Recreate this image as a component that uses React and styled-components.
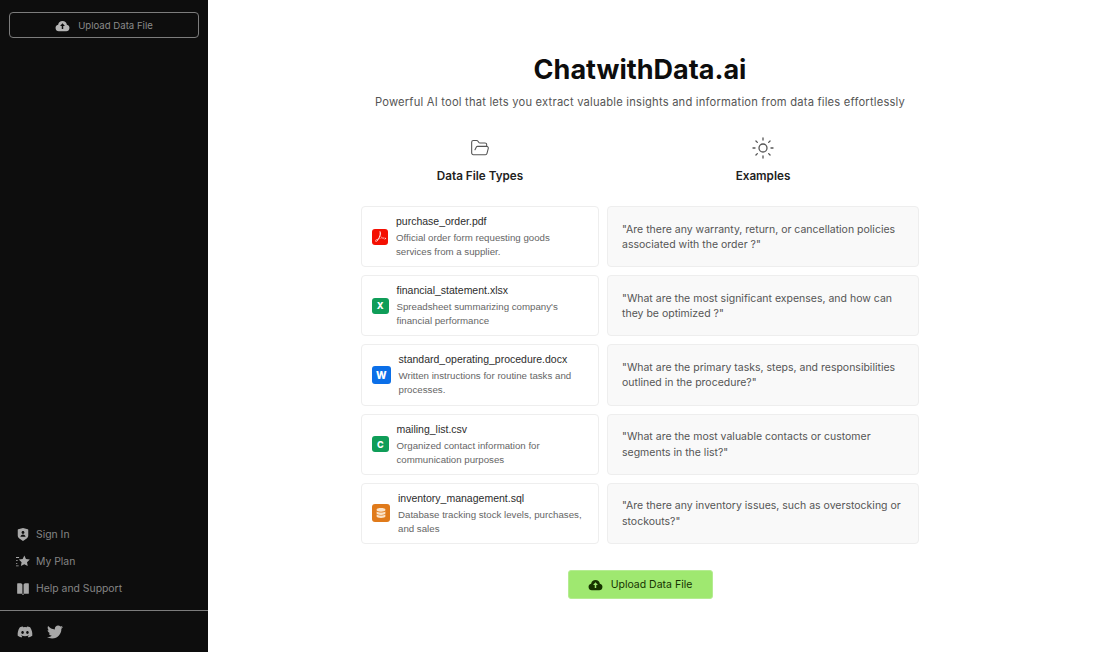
import React from "react"
import styled, { createGlobalStyle } from "styled-components"
import { FaDiscord, FaTwitter, FaDatabase } from "react-icons/fa"
import { RiShieldUserFill, RiBookOpenFill } from "react-icons/ri"
import { SiAdobeacrobatreader } from "react-icons/si"
import { FolderOpen, Sun } from "lucide-react"

const GlobalStyle = createGlobalStyle`
  html, body {
    margin: 0;
    padding: 0;
    height: 100%;
    background: #fff;
    font-family: Inter, "Liberation Sans", sans-serif;
  }
  * {
    box-sizing: border-box;
  }
`

const Page = styled.div`
  display: flex;
  width: 1120px;
  height: 652px;
  overflow: hidden;
`

const Sidebar = styled.aside`
  width: 208px;
  flex-shrink: 0;
  display: flex;
  flex-direction: column;
  background: #0d0d0d;
  color: #9b9b9b;
`

const SideTop = styled.div`
  flex: 1;
  padding: 12px 9px 0;
`

const SideUpload = styled.button`
  width: 100%;
  height: 26px;
  display: flex;
  align-items: center;
  justify-content: center;
  gap: 8px;
  background: transparent;
  border: 1px solid #7c7c7c;
  border-radius: 4px;
  color: #8a8a8a;
  font-family: inherit;
  font-size: 9.6px;
`

const SideNav = styled.nav`
  display: flex;
  flex-direction: column;
  gap: 7px;
  padding: 0 16px 12px;
`

const NavRow = styled.a`
  display: flex;
  align-items: center;
  gap: 6px;
  height: 20px;
  font-size: 10.4px;
  color: #858585;
`

const NavIcon = styled.span`
  width: 14px;
  display: flex;
  justify-content: center;
  color: #a8a8a8;
`

const SideSocial = styled.div`
  height: 42px;
  display: flex;
  align-items: center;
  gap: 14px;
  padding-left: 17px;
  border-top: 1px solid #7c7c7c;
  color: #a8a8a8;
`

const Main = styled.main`
  flex: 1;
  display: flex;
  flex-direction: column;
  align-items: center;
  padding: 52px 48px 0 0;
`

const Title = styled.h1`
  margin: 0;
  font-size: 27px;
  line-height: 36px;
  font-weight: 700;
  color: #0d0d0d;
`

const Subtitle = styled.p`
  margin: 4px 0 0;
  font-size: 11.2px;
  line-height: 20px;
  letter-spacing: 0.2px;
  color: #555;
`

const Board = styled.div`
  margin-top: 22px;
  display: grid;
  grid-template-columns: 238px 312px;
  column-gap: 8px;
`

const Column = styled.section`
  display: flex;
  flex-direction: column;
`

const ColumnHead = styled.header`
  height: 72px;
  display: flex;
  flex-direction: column;
  align-items: center;
  color: #555;
`

const HeadIcon = styled.span`
  height: 28px;
  display: flex;
  align-items: center;
`

const ColumnTitle = styled.h2`
  margin: 4px 0 0;
  font-size: 11.7px;
  line-height: 20px;
  font-weight: 600;
  color: #222;
`

const Stack = styled.div`
  display: flex;
  flex-direction: column;
  gap: 8px;
`

const FileCard = styled.div`
  height: 61.2px;
  display: flex;
  align-items: center;
  gap: 8px;
  padding: 0 14px 0 10px;
  background: #fff;
  border: 1px solid #eeeeee;
  border-radius: 4px;
  font-family: "Liberation Sans", Arial, sans-serif;
`

const Badge = styled.span`
  flex-shrink: 0;
  width: ${props => props.size}px;
  height: ${props => props.size}px;
  display: flex;
  align-items: center;
  justify-content: center;
  border-radius: 3px;
  background: ${props => props.color};
  color: #fff;
  font-family: Inter, sans-serif;
  font-size: ${props => props.size > 17 ? 10 : 9}px;
  font-weight: 800;
`

const FileText = styled.div`
  display: flex;
  flex-direction: column;
`

const FileName = styled.div`
  font-size: 10.5px;
  line-height: 15px;
  color: #2c2c2c;
`

const FileDesc = styled.div`
  margin-top: 2px;
  font-size: 9.7px;
  line-height: 14px;
  color: #666;
`

const ExampleCard = styled.div`
  height: 61.2px;
  display: flex;
  align-items: center;
  padding: 1px 14px 0;
  background: #f9f9f9;
  border: 1px solid #eeeeee;
  border-radius: 4px;
  font-size: 10.5px;
  line-height: 15.5px;
  color: #555;
`

const UploadButton = styled.button`
  margin-top: 26px;
  width: 145px;
  height: 29px;
  display: flex;
  align-items: center;
  justify-content: center;
  gap: 8px;
  background: #9fe870;
  border: 1px solid #b5ec92;
  border-radius: 3px;
  color: #163300;
  font-family: inherit;
  font-size: 10.5px;
`

const CloudIcon = ({ color }) => (
  <svg width="15" height="13" viewBox="0 0 16 14" fill={color} fillRule="evenodd">
    <path d="M4 13.2a3.6 3.6 0 0 1-.7-7.1 4.8 4.8 0 0 1 9.4 0 3.6 3.6 0 0 1-.7 7.1zM8 4.6l-2.6 3h1.8v3.2h1.6V7.6h1.8z" />
  </svg>
)

const PlanIcon = () => (
  <svg width="16" height="14" viewBox="0 0 16 14" fill="currentColor">
    <path d="M9.5.8l1.9 4 4.4.6-3.2 3 .8 4.4-3.9-2.1-3.9 2.1.8-4.4-3.2-3 4.4-.6z" />
    <path d="M0 2.5h3.5v1H0zM0 6h2v1H0zM0 9.5h1.5v1H0zM0 12h3v1H0z" />
  </svg>
)

const files = [
  { name: "purchase_order.pdf", desc: "Official order form requesting goods services from a supplier.", color: "#f40f02", size: 16, icon: <SiAdobeacrobatreader size={11} /> },
  { name: "financial_statement.xlsx", desc: "Spreadsheet summarizing company's financial performance", color: "#0f9d58", size: 16.5, icon: "X" },
  { name: "standard_operating_procedure.docx", desc: "Written instructions for routine tasks and processes.", color: "#0b6fe8", size: 18.5, icon: "W" },
  { name: "mailing_list.csv", desc: "Organized contact information for communication purposes", color: "#0f9d58", size: 16.5, icon: "C" },
  { name: "inventory_management.sql", desc: "Database tracking stock levels, purchases, and sales", color: "#e07a1a", size: 18, icon: <FaDatabase size={10} color="#fbe3c8" /> },
]

const examples = [
  "\"Are there any warranty, return, or cancellation policies associated with the order ?\"",
  "\"What are the most significant expenses, and how can they be optimized ?\"",
  "\"What are the primary tasks, steps, and responsibilities outlined in the procedure?\"",
  "\"What are the most valuable contacts or customer segments in the list?\"",
  "\"Are there any inventory issues, such as overstocking or stockouts?\"",
]

export default function App() {
  return (
    <Page>
      <GlobalStyle />
      <Sidebar>
        <SideTop>
          <SideUpload>
            <CloudIcon color="#b5b5b5" />
            Upload Data File
          </SideUpload>
        </SideTop>
        <SideNav>
          <NavRow><NavIcon><RiShieldUserFill size={15} /></NavIcon>Sign In</NavRow>
          <NavRow><NavIcon><PlanIcon /></NavIcon>My Plan</NavRow>
          <NavRow><NavIcon><RiBookOpenFill size={15} /></NavIcon>Help and Support</NavRow>
        </SideNav>
        <SideSocial>
          <FaDiscord size={16} />
          <FaTwitter size={16} />
        </SideSocial>
      </Sidebar>
      <Main>
        <Title>ChatwithData.ai</Title>
        <Subtitle>Powerful AI tool that lets you extract valuable insights and information from data files effortlessly</Subtitle>
        <Board>
          <Column>
            <ColumnHead>
              <HeadIcon><FolderOpen size={20} strokeWidth={1.3} /></HeadIcon>
              <ColumnTitle>Data File Types</ColumnTitle>
            </ColumnHead>
            <Stack>
              {files.map(file => (
                <FileCard key={file.name}>
                  <Badge color={file.color} size={file.size}>{file.icon}</Badge>
                  <FileText>
                    <FileName>{file.name}</FileName>
                    <FileDesc>{file.desc}</FileDesc>
                  </FileText>
                </FileCard>
              ))}
            </Stack>
          </Column>
          <Column>
            <ColumnHead>
              <HeadIcon><Sun size={24} strokeWidth={1.3} /></HeadIcon>
              <ColumnTitle>Examples</ColumnTitle>
            </ColumnHead>
            <Stack>
              {examples.map(text => (
                <ExampleCard key={text}>{text}</ExampleCard>
              ))}
            </Stack>
          </Column>
        </Board>
        <UploadButton>
          <CloudIcon color="#163300" />
          Upload Data File
        </UploadButton>
      </Main>
    </Page>
  )
}
